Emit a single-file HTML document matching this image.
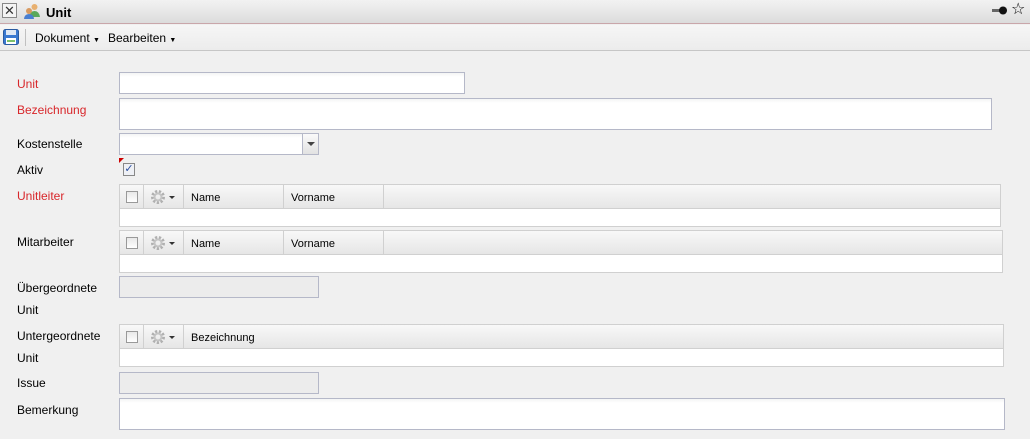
<!DOCTYPE html>
<html><head><meta charset="utf-8"><style>
*{box-sizing:border-box;margin:0;padding:0}
body{width:1030px;height:439px;background:#f0f0f0;font-family:"Liberation Sans","DejaVu Sans",sans-serif;font-size:12px;color:#000;position:relative;overflow:hidden}
.a{position:absolute}
.lbl{position:absolute;left:17px;font-size:12px;line-height:14px}
.red{color:#d8262a}
.inp{position:absolute;border:1px solid #b5b8c8;background:linear-gradient(#f4f5f5,#fff 4px,#fff)}
.dis{position:absolute;border:1px solid #b5b8c8;background:#ececec}
.grid{position:absolute;border:1px solid #d0d0d0;background:#fff}
.gh{position:absolute;left:0;right:0;top:0;height:24px;background:linear-gradient(#f8f8f8,#e6e6e6);border-bottom:1px solid #d0d0d0}
.gc{position:absolute;top:0;height:23px;border-right:1px solid #d0d0d0;font-size:11px;line-height:26px;padding-left:7px}
.cb{position:absolute;left:6px;top:6px;width:12px;height:12px;border:1px solid #999;background:linear-gradient(#e8e8e8,#fff)}
.gear{position:absolute;left:6px;top:4px;width:16px;height:16px}
.arr{position:absolute;left:25px;top:11px;width:0;height:0;border-left:3px solid transparent;border-right:3px solid transparent;border-top:3px solid #333}
</style></head><body>
<div class="a" style="left:0;top:0;width:1030px;height:24px;background:linear-gradient(#f2f2f2,#dcdcdc);border-bottom:1px solid #c9a6aa"></div>
<div class="a" style="left:2px;top:3px;width:15px;height:15px;border:1px solid #888;background:#f4f4f4;font-size:13px;line-height:13px;text-align:center;color:#333">✕</div>
<svg class="a" style="left:23px;top:3px" width="18" height="17"><circle cx="11.5" cy="4" r="3" fill="#e8b070"/><path d="M6 14 Q7 8 11.5 8 Q16 8 17 14Z" fill="#5aa85a"/><circle cx="6" cy="8" r="3" fill="#d89a60"/><path d="M1 16 Q1.5 11 6 11 Q10.5 11 11 16Z" fill="#4a7fd0"/></svg>
<div class="a" style="left:46px;top:5px;font-weight:bold;font-size:13px">Unit</div>
<svg class="a" style="left:992px;top:5px" width="16" height="12"><rect x="0" y="4" width="9" height="3" fill="#666"/><circle cx="11" cy="5.5" r="4" fill="#111"/></svg>
<div class="a" style="left:1011px;top:1px;font-size:16px;line-height:18px">☆</div>
<div class="a" style="left:0;top:25px;width:1030px;height:26px;background:linear-gradient(#f6f6f6,#ececec);border-bottom:1px solid #c6c6c6"></div>
<svg class="a" style="left:3px;top:29px" width="16" height="16"><rect x="0.5" y="0.5" width="15" height="15" rx="2" fill="#3a78d0" stroke="#2a5aa0"/><rect x="3" y="1" width="10" height="5" fill="#dfe8f5"/><rect x="3" y="9" width="10" height="6" fill="#fff"/><rect x="4" y="11" width="8" height="2" fill="#7bc06a"/></svg>
<div class="a" style="left:25px;top:29px;width:1px;height:17px;background:#c0c0c0"></div>
<div class="a" style="left:35px;top:31px;font-size:12px">Dokument <span style="font-size:7px">▼</span></div>
<div class="a" style="left:108px;top:31px;font-size:12px">Bearbeiten <span style="font-size:7px">▼</span></div>

<div class="lbl red" style="top:77px">Unit</div>
<div class="inp" style="left:119px;top:72px;width:346px;height:22px"></div>
<div class="lbl red" style="top:103px">Bezeichnung</div>
<div class="inp" style="left:119px;top:98px;width:873px;height:32px"></div>
<div class="lbl" style="top:137px">Kostenstelle</div>
<div class="inp" style="left:119px;top:133px;width:184px;height:22px"></div>
<div class="a" style="left:302px;top:133px;width:17px;height:22px;border:1px solid #b5b8c8;background:linear-gradient(#fafafa,#e2e2e2)"><div style="position:absolute;left:4px;top:8px;border-left:4px solid transparent;border-right:4px solid transparent;border-top:4px solid #444"></div></div>
<div class="lbl" style="top:163px">Aktiv</div>
<div class="a" style="left:119px;top:158px;border-right:5px solid transparent;border-top:5px solid #c00"></div>
<div class="a" style="left:123px;top:163px;width:12px;height:13px;border:1px solid #888;background:#eef0f5;color:#2a4ea0;font-size:11px;line-height:11px;text-align:center">✓</div>

<div class="lbl red" style="top:189px">Unitleiter</div>
<div class="grid" style="left:119px;top:184px;width:882px;height:43px"><div class="gh">
<div class="gc" style="left:0;width:24px"><div class="cb"></div></div>
<div class="gc" style="left:24px;width:40px"><svg class="gear" viewBox="0 0 16 16"><circle cx="8" cy="8" r="5.5" fill="none" stroke="#b0b0b0" stroke-width="3" stroke-dasharray="2.2 1.6"/><circle cx="8" cy="8" r="3.5" fill="none" stroke="#c4c4c4" stroke-width="2"/></svg><div class="arr"></div></div>
<div class="gc" style="left:64px;width:100px">Name</div>
<div class="gc" style="left:164px;width:100px">Vorname</div></div></div>

<div class="lbl" style="top:235px">Mitarbeiter</div>
<div class="grid" style="left:119px;top:230px;width:884px;height:43px"><div class="gh">
<div class="gc" style="left:0;width:24px"><div class="cb"></div></div>
<div class="gc" style="left:24px;width:40px"><svg class="gear" viewBox="0 0 16 16"><circle cx="8" cy="8" r="5.5" fill="none" stroke="#b0b0b0" stroke-width="3" stroke-dasharray="2.2 1.6"/><circle cx="8" cy="8" r="3.5" fill="none" stroke="#c4c4c4" stroke-width="2"/></svg><div class="arr"></div></div>
<div class="gc" style="left:64px;width:100px">Name</div>
<div class="gc" style="left:164px;width:100px">Vorname</div></div></div>

<div class="lbl" style="top:281px">Übergeordnete</div>
<div class="lbl" style="top:303px">Unit</div>
<div class="dis" style="left:119px;top:276px;width:200px;height:22px"></div>

<div class="lbl" style="top:329px">Untergeordnete</div>
<div class="lbl" style="top:351px">Unit</div>
<div class="grid" style="left:119px;top:324px;width:885px;height:43px"><div class="gh">
<div class="gc" style="left:0;width:24px"><div class="cb"></div></div>
<div class="gc" style="left:24px;width:40px"><svg class="gear" viewBox="0 0 16 16"><circle cx="8" cy="8" r="5.5" fill="none" stroke="#b0b0b0" stroke-width="3" stroke-dasharray="2.2 1.6"/><circle cx="8" cy="8" r="3.5" fill="none" stroke="#c4c4c4" stroke-width="2"/></svg><div class="arr"></div></div>
<div class="gc" style="left:64px;width:820px;border-right:none">Bezeichnung</div></div></div>

<div class="lbl" style="top:376px">Issue</div>
<div class="dis" style="left:119px;top:372px;width:200px;height:22px"></div>
<div class="lbl" style="top:403px">Bemerkung</div>
<div class="inp" style="left:119px;top:398px;width:886px;height:32px"></div>
</body></html>
